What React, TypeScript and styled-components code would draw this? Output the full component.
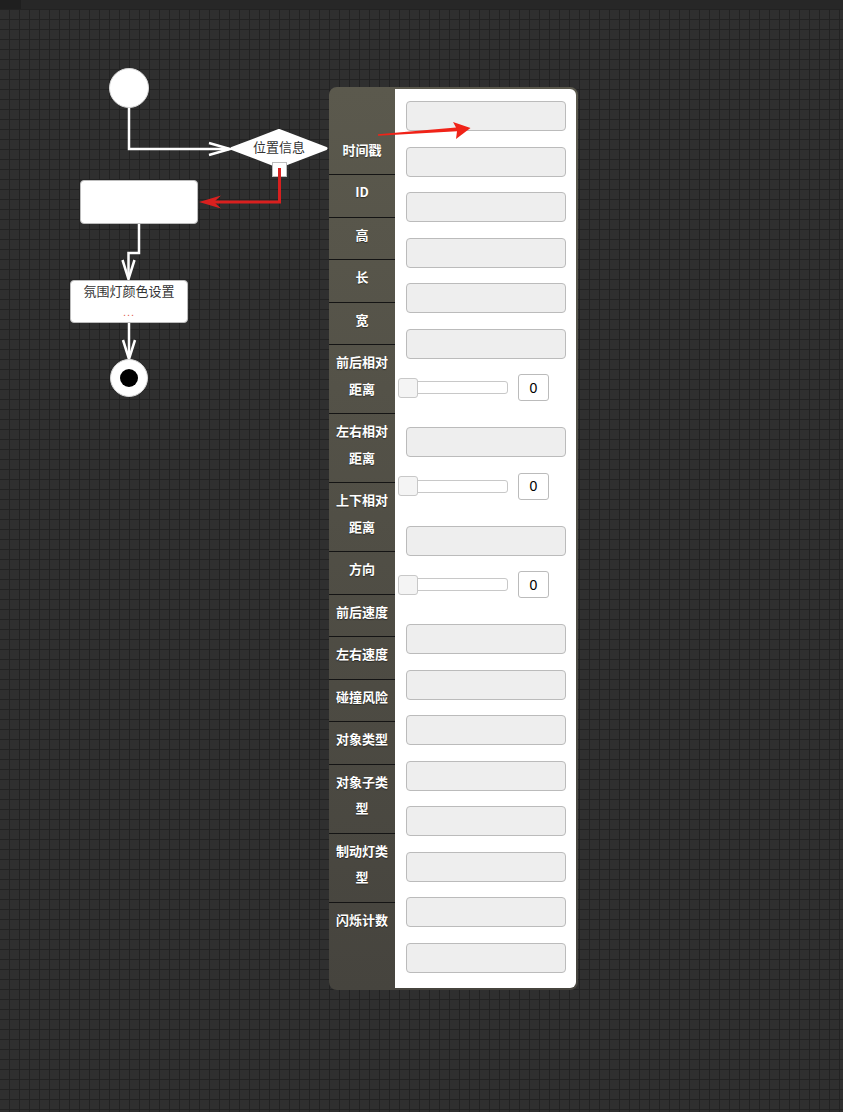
import React from "react"
import styled, { createGlobalStyle } from "styled-components"

const GlobalStyle = createGlobalStyle`
  html, body {
    margin: 0;
    padding: 0;
    background: #2e2e2e;
  }
  * {
    box-sizing: border-box;
  }
`

type Control = { kind: "text" } | { kind: "slider"; value: number }

const labels = [
  "时间戳",
  "ID",
  "高",
  "长",
  "宽",
  "前后相对距离",
  "左右相对距离",
  "上下相对距离",
  "方向",
  "前后速度",
  "左右速度",
  "碰撞风险",
  "对象类型",
  "对象子类型",
  "制动灯类型",
  "闪烁计数",
]

const controls: Control[] = [
  { kind: "text" },
  { kind: "text" },
  { kind: "text" },
  { kind: "text" },
  { kind: "text" },
  { kind: "text" },
  { kind: "slider", value: 0 },
  { kind: "text" },
  { kind: "slider", value: 0 },
  { kind: "text" },
  { kind: "slider", value: 0 },
  { kind: "text" },
  { kind: "text" },
  { kind: "text" },
  { kind: "text" },
  { kind: "text" },
  { kind: "text" },
  { kind: "text" },
  { kind: "text" },
]

const Connectors = () => (
  <DiagramSvg width="843" height="1112" viewBox="0 0 843 1112">
    <g fill="none" stroke="#ffffff" strokeWidth="2.5" strokeLinejoin="miter">
      <path d="M129 108 V149 H229" />
      <path d="M209 143 L230 149 L209 155" />
      <path d="M139 224 V253 H128.5 V277" />
      <path d="M122.5 260 L128.5 279 L134.5 260" />
      <path d="M129 323 V357" />
      <path d="M123 340 L129 359 L135 340" />
    </g>
    <g fill="none" stroke="#d9201f" strokeWidth="3">
      <path d="M279.5 170 V202 H206" />
    </g>
    <path d="M199 202 L221 195.5 L214 202 L221 208.5 Z" fill="#d9201f" />

    <circle cx="129" cy="88" r="19.5" fill="#ffffff" stroke="#d8d8d8" strokeWidth="1" />

    <polygon
      points="232,148.5 279,130.5 326,148.5 279,166.5"
      fill="#ffffff"
      stroke="#ffffff"
      strokeWidth="3"
      strokeLinejoin="round"
    />
    <rect x="272.5" y="162.5" width="14" height="14" fill="#ffffff" stroke="#bdbdbd" />
    <path d="M279.5 168 V177" stroke="#d9201f" strokeWidth="3" />

    <circle cx="129" cy="378" r="18.5" fill="#ffffff" stroke="#d8d8d8" strokeWidth="1" />
    <circle cx="129" cy="378" r="9" fill="#000000" />
  </DiagramSvg>
)

const PointerArrow = () => (
  <OverlaySvg width="843" height="1112" viewBox="0 0 843 1112">
    <path
      d="M378 134.3 L456 127.5 L453 122 L470.5 128 L456 139 L457 131.2 L378 135.7 Z"
      fill="#f02318"
    />
  </OverlaySvg>
)

export default function App() {
  return (
    <Page>
      <GlobalStyle />
      <TopBar>
        <TopBarCorner />
      </TopBar>
      <Canvas />

      <Connectors />

      <DecisionLabel>位置信息</DecisionLabel>
      <ActionNode $left={80} $top={180} $width={118} $height={44} />
      <ActionNode $left={70} $top={280} $width={118} $height={43}>
        <NodeTitle>氛围灯颜色设置</NodeTitle>
        <NodeMore>...</NodeMore>
      </ActionNode>

      <Inspector>
        <LabelColumn>
          {labels.map((label, i) => (
            <LabelRow key={label} $first={i === 0} $last={i === labels.length - 1}>
              {label}
            </LabelRow>
          ))}
        </LabelColumn>
        <FieldColumn>
          {controls.map((control, i) =>
            control.kind === "text" ? (
              <TextField key={i} readOnly value="" />
            ) : (
              <SliderRow key={i}>
                <SliderTrack>
                  <SliderThumb />
                </SliderTrack>
                <NumberBox>{control.value}</NumberBox>
              </SliderRow>
            )
          )}
        </FieldColumn>
      </Inspector>

      <PointerArrow />
    </Page>
  )
}

const Page = styled.div`
  position: relative;
  width: 843px;
  height: 1112px;
  overflow: hidden;
  display: flex;
  flex-direction: column;
  font-family: "Noto Sans CJK SC", "Noto Sans", sans-serif;
`

const TopBar = styled.div`
  height: 9px;
  flex-shrink: 0;
  background: #272727;
  display: flex;
`

const TopBarCorner = styled.div`
  width: 21px;
  background: #1f1f1f;
`

const Canvas = styled.div`
  flex: 1;
  background-color: #2f2f2f;
  background-image: linear-gradient(to right, #222222 1px, transparent 1px),
    linear-gradient(to bottom, #222222 1px, transparent 1px);
  background-size: 10px 10px;
  background-position: 9px 0, 0 0;
`

const DiagramSvg = styled.svg`
  position: absolute;
  left: 0;
  top: 0;
  pointer-events: none;
`

const OverlaySvg = styled.svg`
  position: absolute;
  left: 0;
  top: 0;
  pointer-events: none;
  z-index: 5;
`

const DecisionLabel = styled.div`
  position: absolute;
  left: 239px;
  top: 138px;
  width: 80px;
  text-align: center;
  font-size: 13px;
  line-height: 18px;
  color: #333;
`

const ActionNode = styled.div<{ $left: number; $top: number; $width: number; $height: number }>`
  position: absolute;
  left: ${(p) => p.$left}px;
  top: ${(p) => p.$top}px;
  width: ${(p) => p.$width}px;
  height: ${(p) => p.$height}px;
  background: #ffffff;
  border: 1px solid #bdbdbd;
  border-radius: 4px;
  display: flex;
  flex-direction: column;
  align-items: center;
  padding-top: 1px;
`

const NodeTitle = styled.div`
  font-size: 13px;
  line-height: 18px;
  color: #333;
`

const NodeMore = styled.div`
  margin-top: 6px;
  font-family: "Liberation Sans", Arial, sans-serif;
  font-size: 11px;
  line-height: 12px;
  letter-spacing: 1px;
  color: #e2604f;
`

const Inspector = styled.div`
  position: absolute;
  left: 329px;
  top: 87px;
  display: flex;
  border-radius: 8px;
  background: linear-gradient(to bottom, #5b594d, #46443e);
  z-index: 2;
`

const LabelColumn = styled.div`
  width: 66px;
  flex-shrink: 0;
  display: flex;
  flex-direction: column;
`

const LabelRow = styled.div<{ $first?: boolean; $last?: boolean }>`
  padding: ${(p) => (p.$first ? "49.5px" : "4px")} 5px 11px;
  flex: ${(p) => (p.$last ? 1 : "none")};
  border-bottom: ${(p) => (p.$last ? "none" : "1px solid #141414")};
  color: #ffffff;
  font-size: 13px;
  font-weight: 700;
  line-height: 26.5px;
  text-align: center;
  text-shadow: 0 1px 1px rgba(0, 0, 0, 0.45);
`

const FieldColumn = styled.div`
  width: 181px;
  margin: 2px 2px 2px 0;
  padding-top: 12px;
  background: #ffffff;
  border-radius: 0 6px 6px 0;
  display: flex;
  flex-direction: column;
`

const TextField = styled.input`
  display: block;
  width: 160px;
  height: 30px;
  margin: 0 0 15.5px 11px;
  padding: 0 6px;
  background: #eeeeee;
  border: 1px solid #bbbbbb;
  border-radius: 4px;
  outline: none;
  font-size: 13px;
`

const SliderRow = styled.div`
  display: flex;
  align-items: center;
  height: 27px;
  margin: 0 0 26px 3px;
`

const SliderTrack = styled.div`
  position: relative;
  width: 110px;
  height: 13px;
  background: #ffffff;
  border: 1px solid #c8c8c8;
  border-radius: 3px;
`

const SliderThumb = styled.div`
  position: absolute;
  left: -1px;
  top: -4.5px;
  width: 20px;
  height: 20px;
  background: #f4f4f4;
  border: 1px solid #c8c8c8;
  border-radius: 3px;
`

const NumberBox = styled.div`
  width: 31px;
  height: 27px;
  margin-left: 10px;
  display: flex;
  align-items: center;
  justify-content: center;
  background: #ffffff;
  border: 1px solid #bbbbbb;
  border-radius: 3px;
  font-family: "Liberation Sans", Arial, sans-serif;
  font-size: 14px;
  color: #000;
`
